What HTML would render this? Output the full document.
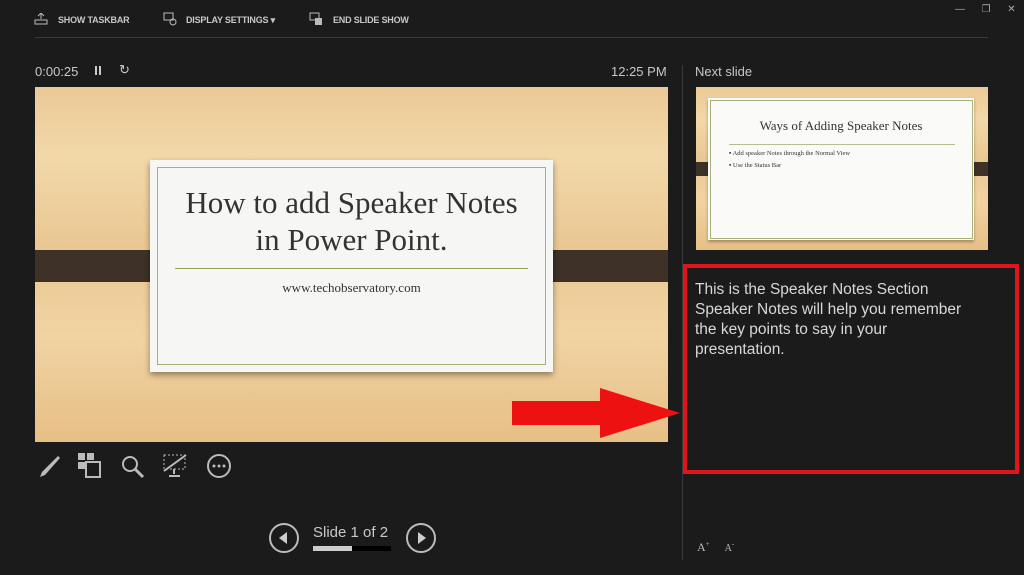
<!DOCTYPE html><html><head><style>
body{margin:0;width:1024px;height:575px;background:#1b1b1b;position:relative;overflow:hidden;font-family:"Liberation Sans",sans-serif;color:#bbb}
.a{position:absolute}
.wood{background:linear-gradient(180deg,#ebc996 0%,#f2d8a8 20%,#e9c792 45%,#f1d3a2 70%,#e6bf86 100%)}
.tb{font-size:9px;font-weight:bold;color:#c8c8c8;top:15px;letter-spacing:-0.2px}
.serif{font-family:"Liberation Serif",serif;color:#333}
</style></head><body>
<div class="a tb" style="left:58px">SHOW TASKBAR</div>
<div class="a tb" style="left:186px">DISPLAY SETTINGS ▾</div>
<div class="a tb" style="left:333px">END SLIDE SHOW</div>
<svg class="a" style="left:34px;top:13px" width="14" height="12"><path d="M1 7h12v4H1zM7 0v6M4 3l3-3 3 3" stroke="#bbb" fill="none"/></svg>
<svg class="a" style="left:163px;top:12px" width="14" height="14"><rect x="1" y="1" width="9" height="7" stroke="#bbb" fill="none"/><circle cx="10" cy="10" r="3" stroke="#bbb" fill="none"/></svg>
<svg class="a" style="left:309px;top:12px" width="14" height="14"><rect x="1" y="1" width="9" height="7" stroke="#bbb" fill="none"/><rect x="6" y="6" width="7" height="7" fill="#bbb"/></svg>
<div class="a" style="left:955px;top:4px;font-size:10px;color:#aaa">—&nbsp;&nbsp;&nbsp;&nbsp;&nbsp;&nbsp;❐&nbsp;&nbsp;&nbsp;&nbsp;&nbsp;&nbsp;✕</div>
<div class="a" style="left:35px;top:37px;width:953px;height:1px;background:#3a3a3a"></div>
<div class="a" style="left:35px;top:64px;font-size:13px;color:#c8c8c8">0:00:25</div>
<div class="a" style="left:95px;top:66px;width:2px;height:9px;background:#ccc;box-shadow:4px 0 #ccc"></div>
<div class="a" style="left:119px;top:62px;font-size:13px;color:#ccc">↻</div>
<div class="a" style="left:611px;top:64px;font-size:13px;color:#c8c8c8">12:25 PM</div>
<div class="a" style="left:695px;top:64px;font-size:13px;color:#c8c8c8">Next slide</div>
<div class="a" style="left:682px;top:65px;width:1px;height:495px;background:#3a3a3a"></div>
<div class="a wood" style="left:35px;top:87px;width:633px;height:355px"></div>
<div class="a" style="left:35px;top:250px;width:128px;height:32px;background:#3d3128"></div>
<div class="a" style="left:541px;top:250px;width:127px;height:32px;background:#3d3128"></div>
<div class="a" style="left:150px;top:160px;width:403px;height:212px;background:#f6f6f4;box-shadow:0 3px 6px rgba(0,0,0,.4)"></div>
<div class="a" style="left:157px;top:167px;width:387px;height:196px;border:1px solid #a9b07a"></div>
<div class="a serif" style="left:150px;top:184px;width:403px;text-align:center;font-size:31px;line-height:37px">How to add Speaker Notes<br>in Power Point.</div>
<div class="a" style="left:175px;top:268px;width:353px;height:1px;background:#9aa25a"></div>
<div class="a serif" style="left:150px;top:280px;width:403px;text-align:center;font-size:13px">www.techobservatory.com</div>
<div class="a wood" style="left:696px;top:87px;width:292px;height:163px"></div>
<div class="a" style="left:696px;top:162px;width:18px;height:14px;background:#3d3128"></div>
<div class="a" style="left:970px;top:162px;width:18px;height:14px;background:#3d3128"></div>
<div class="a" style="left:708px;top:98px;width:266px;height:142px;background:#fafaf8;box-shadow:0 2px 3px rgba(0,0,0,.3)"></div>
<div class="a" style="left:710px;top:100px;width:261px;height:137px;border:1px solid #a9b07a"></div>
<div class="a serif" style="left:708px;top:118px;width:266px;text-align:center;font-size:13px">Ways of Adding Speaker Notes</div>
<div class="a" style="left:729px;top:144px;width:226px;height:1px;background:#b8bd90"></div>
<div class="a serif" style="left:729px;top:148px;font-size:6.5px;line-height:12px">▪ Add speaker Notes through the Normal View<br>▪ Use the Status Bar</div>
<div class="a" style="left:683px;top:264px;width:328px;height:202px;border:4px solid #e0141c"></div>
<div class="a" style="left:695px;top:280px;width:290px;font-size:15.5px;line-height:20px;color:#d8d8d8">This is the Speaker Notes Section<br>Speaker Notes will help you remember<br>the key points to say in your<br>presentation.</div>
<svg class="a" style="left:510px;top:386px" width="172" height="54"><path d="M2 15h88V2l80 25-80 25V39H2z" fill="#ee1111"/></svg>
<svg class="a" style="left:36px;top:454px" width="26" height="26"><path d="M22 2L6 18l-2 5 5-2L24 4z" fill="#bbb"/></svg>
<svg class="a" style="left:78px;top:453px" width="24" height="26"><rect x="0" y="0" width="7" height="7" fill="#bbb"/><rect x="9" y="0" width="7" height="7" fill="#bbb"/><rect x="0" y="9" width="7" height="7" fill="#bbb"/><rect x="8" y="9" width="14" height="15" stroke="#bbb" stroke-width="2" fill="none"/></svg>
<svg class="a" style="left:121px;top:455px" width="24" height="24"><circle cx="9" cy="9" r="7" stroke="#bbb" stroke-width="2" fill="none"/><path d="M14 14l8 8" stroke="#bbb" stroke-width="3"/></svg>
<svg class="a" style="left:162px;top:453px" width="26" height="26"><rect x="2" y="2" width="21" height="14" stroke="#bbb" stroke-dasharray="2 2" fill="none"/><path d="M2 18L24 2M12 16v5M7 23h11" stroke="#bbb" stroke-width="2"/></svg>
<svg class="a" style="left:206px;top:453px" width="26" height="26"><circle cx="13" cy="13" r="11" stroke="#bbb" stroke-width="2" fill="none"/><circle cx="8" cy="13" r="1.5" fill="#bbb"/><circle cx="13" cy="13" r="1.5" fill="#bbb"/><circle cx="18" cy="13" r="1.5" fill="#bbb"/></svg>
<svg class="a" style="left:268px;top:522px" width="32" height="32"><circle cx="16" cy="16" r="14" stroke="#bbb" stroke-width="2" fill="none"/><path d="M19 10v12l-8-6z" fill="#ccc"/></svg>
<div class="a" style="left:313px;top:524px;font-size:15px;color:#c8c8c8">Slide 1 of 2</div>
<div class="a" style="left:313px;top:546px;width:78px;height:5px;background:#000"></div>
<div class="a" style="left:313px;top:546px;width:39px;height:5px;background:#ccc"></div>
<svg class="a" style="left:405px;top:522px" width="32" height="32"><circle cx="16" cy="16" r="14" stroke="#bbb" stroke-width="2" fill="none"/><path d="M13 10v12l8-6z" fill="#ccc"/></svg>
<div class="a" style="left:697px;top:540px;font-size:12px;color:#bbb;font-family:'Liberation Serif',serif">A<sup style="font-size:7px">+</sup>&nbsp;&nbsp;&nbsp;&nbsp;&nbsp;<span style="font-size:10px">A</span><sup style="font-size:7px">-</sup></div>
</body></html>
